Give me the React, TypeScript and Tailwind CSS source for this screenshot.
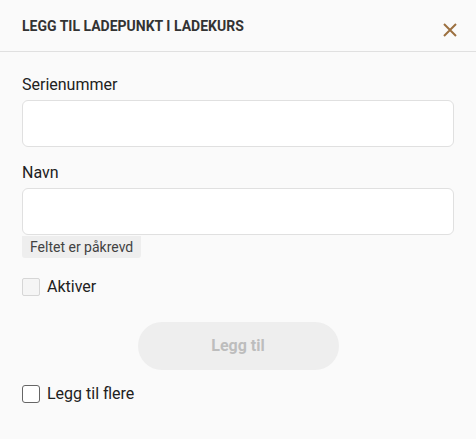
import React from 'react';

export default function App() {
  return (
    <div
      className="w-[476px] h-[439px] bg-[#fafafa] text-[#212121] overflow-hidden"
      style={{ fontFamily: 'Roboto, "Liberation Sans", sans-serif' }}
    >
      {/* Header */}
      <div className="flex items-start justify-between h-[52px] border-b border-[#e0e0e0] pl-[22px] pr-[19px]">
        <h2 className="mt-[17px] text-[14px] leading-[18px] font-bold text-[#333] uppercase">
          Legg til ladepunkt i ladekurs
        </h2>
        <button className="mt-[23px] w-[14px] h-[14px] text-[#9c7040]" aria-label="Lukk">
          <svg viewBox="0 0 14 14" className="w-[14px] h-[14px]" fill="none" stroke="currentColor" strokeWidth="2">
            <path d="M1 1L13 13M13 1L1 13" />
          </svg>
        </button>
      </div>

      {/* Form */}
      <div className="px-[22px] pt-[23px]">
        <label className="block text-[16px] leading-[20px]">Serienummer</label>
        <input className="mt-[5px] block w-[432px] h-[47px] rounded-[6px] border border-[#e0e0e0] bg-white px-3 outline-none" />

        <label className="mt-[16px] block text-[16px] leading-[20px]">Navn</label>
        <input className="mt-[5px] block w-[432px] h-[47px] rounded-[6px] border border-[#e0e0e0] bg-white px-3 outline-none" />
        <div className="inline-block h-[22px] rounded-b-[3px] bg-[#eeeeee] px-[8px] text-[14px] leading-[22px] text-[#424242]">
          Feltet er påkrevd
        </div>

        <label className="mt-[18px] flex items-center gap-[7px] text-[16px] leading-[20px] text-[#212121]">
          <span className="block w-[18px] h-[18px] rounded-[2px] border border-[#d6d6d6] bg-[#f5f5f5]" />
          Aktiver
        </label>

        <div className="mt-[25px] flex justify-center">
          <button
            disabled
            className="w-[201px] h-[48px] rounded-full bg-[#eeeeee] text-[16px] font-bold text-[#bdbdbd]"
          >
            Legg til
          </button>
        </div>

        <label className="mt-[14px] flex items-center gap-[7px] text-[16px] leading-[20px] text-[#212121]">
          <span className="block w-[18px] h-[18px] rounded-[3px] border border-[#666] bg-white" />
          Legg til flere
        </label>
      </div>
    </div>
  );
}
